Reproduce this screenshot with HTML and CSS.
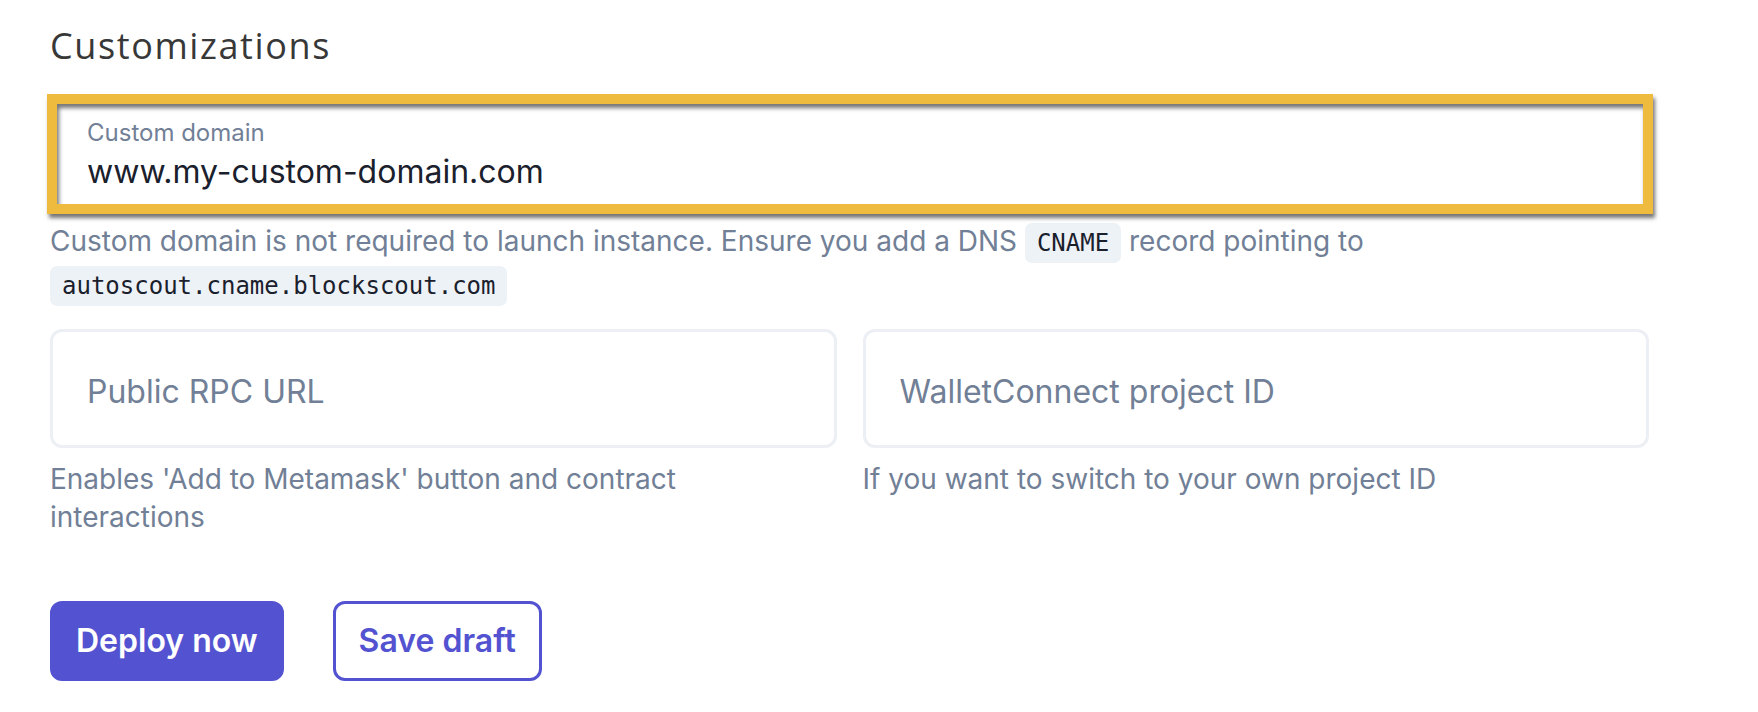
FILE: index.html
```html
<!DOCTYPE html>
<html lang="en">
<head>
<meta charset="utf-8">
<title>Customizations</title>
<link rel="stylesheet" href="styles.css">
</head>
<body>
<main class="page">
  <h2 class="title">Customizations</h2>

  <div class="field field-highlight">
    <div class="input input-filled">
      <label class="float-label">Custom domain</label>
      <div class="value">www.my-custom-domain.com</div>
    </div>
    <span class="annotation"></span>
  </div>
  <p class="helper helper-domain">Custom domain is not required to launch instance. Ensure you add a DNS <code class="chip">CNAME</code> record pointing to <code class="chip">autoscout.cname.blockscout.com</code></p>

  <div class="grid">
    <div class="col">
      <div class="input input-empty"><span class="placeholder">Public RPC URL</span></div>
      <p class="helper helper-col">Enables 'Add to Metamask' button and contract interactions</p>
    </div>
    <div class="col">
      <div class="input input-empty"><span class="placeholder">WalletConnect project ID</span></div>
      <p class="helper helper-col">If you want to switch to your own project ID</p>
    </div>
  </div>

  <div class="actions">
    <button class="btn btn-primary">Deploy now</button>
    <button class="btn btn-outline">Save draft</button>
  </div>
</main>
</body>
</html>
```
FILE: styles.css
```css
* { box-sizing: border-box; }

html, body {
  margin: 0;
  background: #ffffff;
}

body {
  font-family: Inter, "Liberation Sans", sans-serif;
  color: #1a202c;
}

.page {
  width: 1649px;
  padding: 26px 0 0 50px;
}

.title {
  margin: 0;
  font-family: "Open Sans", sans-serif;
  font-weight: 500;
  font-size: 36px;
  line-height: 40px;
  letter-spacing: 1.6px;
  color: #383838;
}

.field {
  position: relative;
  margin-top: 28px;
}

.input {
  height: 119px;
  border: 3px solid #eceff3;
  border-radius: 12px;
  padding: 0 34px;
  display: flex;
  flex-direction: column;
  justify-content: center;
  background: #fff;
}

.input-filled {
  gap: 5px;
  padding-top: 3px;
}

.input-empty {
  padding-top: 7px;
}

.float-label {
  font-size: 24px;
  line-height: 28.8px;
  color: #718096;
}

.value {
  font-size: 32px;
  line-height: 38.4px;
  color: #1a202c;
}

.placeholder {
  font-size: 32px;
  line-height: 38.4px;
  color: #718096;
}

.annotation {
  position: absolute;
  top: 0;
  bottom: -1px;
  left: -3px;
  right: -4px;
  border: 10px solid #efbb3f;
  box-shadow: 2px 4px 4px rgba(0, 0, 0, 0.55), inset 2px 4px 4px rgba(0, 0, 0, 0.55);
  pointer-events: none;
}

.helper {
  margin: 0;
  font-size: 28px;
  color: #718096;
}

.helper-domain {
  margin-top: 8px;
  line-height: 40px;
}

.chip {
  display: inline-block;
  vertical-align: middle;
  font-family: "DejaVu Sans Mono", monospace;
  font-size: 24px;
  line-height: 32px;
  padding: 4px 12px;
  background: #edf2f7;
  color: #1a202c;
  border-radius: 7px;
}

.grid {
  margin-top: 23px;
  display: grid;
  grid-template-columns: 1fr 1fr;
  column-gap: 26px;
}

.helper-col {
  margin-top: 12px;
  line-height: 38px;
}

.actions {
  margin-top: 65px;
  display: flex;
  gap: 49px;
}

.btn {
  height: 80px;
  padding: 0 23px;
  border-radius: 12px;
  font-family: Inter, sans-serif;
  font-size: 32px;
  font-weight: 600;
  cursor: pointer;
}

.btn-primary {
  background: #5353d1;
  color: #ffffff;
  border: 3px solid #5353d1;
}

.btn-outline {
  background: #ffffff;
  color: #5353d1;
  border: 3px solid #5353d1;
}
```
